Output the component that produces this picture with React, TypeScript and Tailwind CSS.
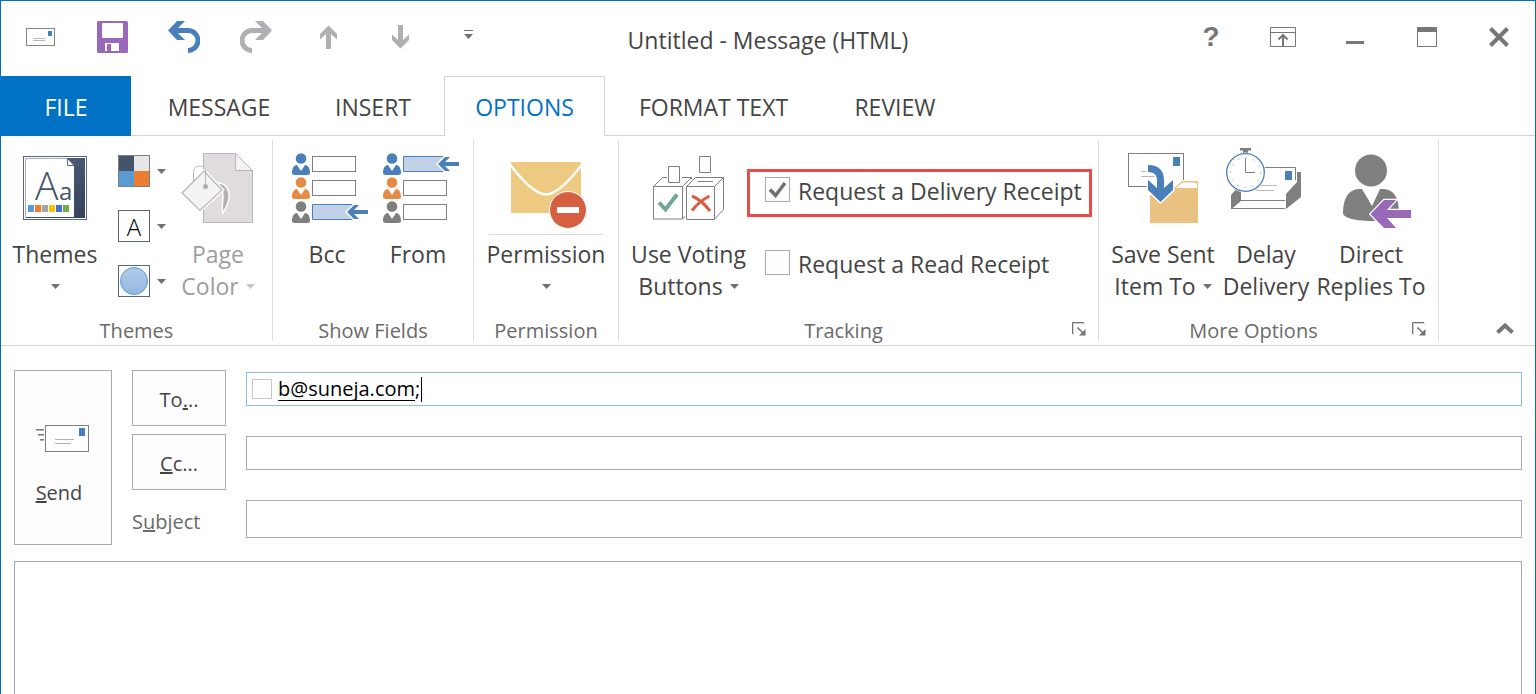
import { FC, ReactNode, useState } from 'react'
import clsx from 'clsx'

const PEOPLE = ['#4a80ba', '#e68b45', '#7f7f7f']

/* Quick access toolbar */

const EnvelopeIcon = () => (
  <svg width="29" height="18" viewBox="0 0 29 18" fill="none">
    <rect x=".5" y=".5" width="28" height="17" stroke="#848484" />
    <rect x="22" y="3" width="4" height="5" fill="#4a80ba" />
    <path d="M7 10.500h12M7 12.500h12" stroke="#b9b9b9" />
  </svg>
)

const SaveIcon = () => (
  <svg width="31" height="32" viewBox="0 0 31 32">
    <rect width="31" height="32" rx="1.500" fill="#9968b8" />
    <rect x="5" y="2" width="21" height="15" rx="1" fill="#fff" />
    <rect x="8" y="22" width="14" height="8" fill="#fff" />
    <rect x="10" y="23" width="4" height="8" fill="#9968b8" />
  </svg>
)

const UndoIcon: FC<{ flip?: boolean }> = ({ flip }) => (
  <svg width="32" height="32" viewBox="0 0 32 32" className={clsx(flip ? '-scale-x-100 text-[#b1afb1]' : 'text-[#4a80ba]')}>
    <path d="M6 9.500h14a10 10 0 0 1 0 20" fill="none" stroke="currentColor" strokeWidth="5" />
    <path d="M0 9.500 9 0h8l-7 7v5l7 7H9z" fill="currentColor" />
  </svg>
)

const ArrowIcon: FC<{ down?: boolean }> = ({ down }) => (
  <svg width="17" height="24" viewBox="0 0 17 24" className={clsx(down && 'rotate-180')}>
    <path d="M8.500 .5 17 9v5.500L11 9v15H6V9l-6 5.500V9z" fill="#b1afb1" />
  </svg>
)

const CustomizeIcon = () => (
  <svg width="9" height="16" viewBox="0 0 9 16" className="mr-2">
    <path d="M0 1h9v1H0zM0 5h9L4.500 10z" fill="#717171" />
  </svg>
)

/* Window controls */

const RibbonDisplayIcon = () => (
  <svg width="26" height="20" viewBox="0 0 26 20" fill="none" stroke="#767676">
    <path d="M.5 .5h25v19H.5zM.5 5.500h25" />
    <path d="M13 19V8M8.500 12.500 13 8l4.500 4.500" strokeWidth="2" />
  </svg>
)

const MinimizeIcon = () => (
  <svg width="18" height="20" viewBox="0 0 18 20">
    <path d="M0 14h18v3H0z" fill="#767676" />
  </svg>
)

const MaximizeIcon = () => (
  <svg width="20" height="20" viewBox="0 0 20 20" fill="none">
    <rect x=".5" y=".5" width="19" height="19" stroke="#767676" />
    <path d="M0 0h20v5H0z" fill="#767676" />
  </svg>
)

const CloseIcon = () => (
  <svg width="20" height="20" viewBox="0 0 20 20">
    <path d="m1.500 1.500 17 17m0-17-17 17" stroke="#767676" strokeWidth="4" />
  </svg>
)

/* Ribbon */

const ThemesIcon = () => (
  <svg width="64" height="99" viewBox="0 0 64 99" fill="none">
    <defs>
      <linearGradient id="spine" x1="0" y1="0" x2="1" y2="1">
        <stop offset="0" stopColor="#5b6a84" />
        <stop offset="1" stopColor="#32425a" />
      </linearGradient>
    </defs>
    <rect x=".5" y="16.500" width="63" height="63" stroke="#58667f" />
    <path d="M2.500 78V18.500H44" stroke="#a3adbf" />
    <path d="M44 18h18v60H3v-1h48V26z" fill="url(#spine)" />
    <path d="M44.500 18.500v7H51z" fill="#fff" stroke="#58667f" />
    <text x="12" y="60" fontFamily="Open Sans, sans-serif" fontWeight="300" fontSize="39" fill="#44546a">A</text>
    <text x="36" y="60" fontFamily="Open Sans, sans-serif" fontSize="24" fill="#44546a">a</text>
    <path d="M5 65h6v7H5z" fill="#5b9bd5" />
    <path d="M12 65h6v7h-6z" fill="#ed7d31" />
    <path d="M19 65h6v7h-6z" fill="#a5a5a5" />
    <path d="M26 65h6v7h-6z" fill="#ffc000" />
    <path d="M33 65h6v7h-6z" fill="#4472c4" />
    <path d="M40 65h6v7h-6z" fill="#70ad47" />
  </svg>
)

const ColorsIcon = () => (
  <svg width="32" height="32" viewBox="0 0 32 32">
    <path d="M0 0h16v16H0z" fill="#44546a" />
    <path d="M16 0h16v16H16z" fill="#e7e6e6" />
    <path d="M0 16h16v16H0z" fill="#5b9bd5" />
    <path d="M16 16h16v16H16z" fill="#ed7d31" />
    <rect x=".5" y=".5" width="31" height="31" fill="none" stroke="#7f7f7f" />
  </svg>
)

const FontsIcon = () => (
  <svg width="32" height="32" viewBox="0 0 32 32">
    <rect x=".5" y=".5" width="31" height="31" fill="#fff" stroke="#58667f" />
    <text x="16" y="26" textAnchor="middle" fontFamily="Open Sans, sans-serif" fontWeight="300" fontSize="24" fill="#000">A</text>
  </svg>
)

const EffectsIcon = () => (
  <svg width="32" height="32" viewBox="0 0 32 32">
    <defs>
      <linearGradient id="effect" x1="0" y1="0" x2="0" y2="1">
        <stop offset="0" stopColor="#b1cbe9" />
        <stop offset="1" stopColor="#95b8e1" />
      </linearGradient>
    </defs>
    <rect x=".5" y=".5" width="31" height="31" fill="#fff" stroke="#58667f" />
    <circle cx="16" cy="16" r="13.500" fill="url(#effect)" stroke="#5b9bd5" />
  </svg>
)

const PageColorIcon = () => (
  <svg width="74" height="99" viewBox="0 0 74 99" stroke="#b7b4b7">
    <path d="M22.500 13.500h32l17 17v52h-49z" fill="#dfdbdf" />
    <path d="M54.500 13.500v17h17z" fill="#f5f2f5" />
    <path d="M35 43c8-1 14 5 13 15-1 6-3 10-6 15-2-6 0-10 0-16 0-4-1-8-3-9z" fill="#b1afb1" stroke="#fff" strokeWidth="1.500" />
    <path d="m1 53 22-22 18 19-22 20.500z" fill="#f5f2f5" stroke="#fff" strokeWidth="4" />
    <path d="m1 53 22-22 18 19-22 20.500z" fill="#f5f2f5" strokeWidth="1.200" />
    <path d="M12.500 41v-9c0-8 12-8 12 0v14" fill="none" />
    <circle cx="24.500" cy="46.500" r="2.500" fill="#b1afb1" stroke="none" />
  </svg>
)

// active is the row that gets highlighted with the arrow
const FieldsIcon: FC<{ active: number }> = ({ active }) => (
  <svg width="82" height="99" viewBox="0 0 82 99">
    {PEOPLE.map((color, i) => (
      <g key={i} transform={`translate(0 ${i * 24})`}>
        <circle cx="15" cy="18.500" r="5.300" fill={color} />
        <path d="M11 25l4 6 4-6c3 0 5 3 5 8 0 1-1 2-3 2H9c-2 0-3-1-3-2 0-5 2-8 5-8z" fill={color} />
        {i === active ? (
          <>
            <path d="M26.500 16.500H67L61 24l6 7.500H26.500z" fill="#c1d2e8" />
            <path d="M66 16.500H26.500v15H66" fill="none" stroke="#4a80ba" />
            <path d="M59 24l9-9h9l-6 6.500h12v5H71l6 6.500h-9z" fill="#fff" />
            <path d="M61 24l7-7h5l-5 5h14v4H68l5 5h-5z" fill="#4a80ba" />
          </>
        ) : (
          <rect x="26.500" y="16.500" width="43" height="15" fill="none" stroke="#7f7f7f" />
        )}
      </g>
    ))}
  </svg>
)

const PermissionIcon = () => (
  <svg width="114" height="99" viewBox="0 0 114 99">
    <path d="M22 22h70v51H22z" fill="#eec981" />
    <path d="M21 24.500C36 44 48 54.500 57 54.500S78 44 93 24.500" fill="none" stroke="#fff" strokeWidth="2.500" />
    <circle cx="79" cy="70" r="18.500" fill="#d75f41" stroke="#fff" />
    <path d="M68 67h22v6H68z" fill="#fff" />
    <path d="M0 94h114v1H0z" fill="#dcdcdc" />
  </svg>
)

const VotingIcon = () => (
  <svg width="74" height="99" viewBox="0 0 74 99" fill="#fff" stroke="#7f7f7f">
    <path d="M1.500 46.500l9-9h29v32l-9 9.500h-29zM1.500 46.500h29V79M30.500 46.500l9-9" />
    <path d="M34.500 46.500l9-9h28v32L63 79.500H34.500zM34.500 46.500h28v33M62.500 46.500l9-9" stroke="#fff" strokeWidth="3" />
    <path d="M34.500 46.500l9-9h28v32l-9 10h-28zM34.500 46.500h28v33M62.500 46.500l9-9M46 41.500h15" />
    <path d="M15 37h15v6H15z" stroke="none" />
    <path d="M16.500 26.500h11v16h-11zM47.500 16.500h11v16h-11z" />
    <path d="M7 62.500l6.500 7L25 54.500" fill="none" stroke="#75a798" strokeWidth="4" />
    <path d="M40 56c7 3 12 7 18 15M57.500 56C50 60 45 64 40 70.500" fill="none" stroke="#d75f41" strokeWidth="3" />
  </svg>
)

const SaveSentIcon = () => (
  <svg width="70" height="99" viewBox="0 0 70 99">
    <rect x=".5" y="13.500" width="55" height="33" fill="#fff" stroke="#7f7f7f" />
    <path d="M45 17h7v9h-7z" fill="#4a80ba" />
    <path d="M13 31.500h15M13 36.500h15" stroke="#b9b9b9" />
    <path d="M21 47h25l7-7h19v44H21z" fill="#fff" />
    <path d="M22 48h24l8-7h16v42H22z" fill="#eac282" />
    <path d="M48 48l6.500-5.500H67q2 0 2 2V48z" fill="#fff" />
    <path d="M20 25c11 0 16 6 16 15v8l9-8v10L32.500 62 20 50V40l9 8v-8c0-5-3-8-9-8z" fill="#4a80ba" stroke="#fff" strokeWidth="3" paintOrder="stroke" />
  </svg>
)

const DelayIcon = () => (
  <svg width="80" height="99" viewBox="0 0 80 99">
    <path d="M37 27.500h32.500V40M5 68.500h54M15 60.500h44" fill="none" stroke="#7f7f7f" />
    <path d="M59 31h7v9h-7z" fill="#4a80ba" />
    <path d="M35 45.500h16M30 50.500h18" stroke="#b9b9b9" />
    <path d="M5 55l7-8 3 3v11L5 69.500zM60 54l11-12V32h4v25L60 69z" fill="#7f7f7f" />
    <path d="M14 8h11v2.500h-3V14h-5v-3.500h-3z" fill="#7f7f7f" />
    <circle cx="19.500" cy="32.500" r="20" fill="#fff" />
    <circle cx="19.500" cy="32.500" r="18.800" fill="#fff" stroke="#4a80ba" strokeWidth="1.300" />
    <circle cx="19.500" cy="32.500" r="15" fill="none" stroke="#8c8c8c" strokeDasharray="1 6.854" />
    <path d="M19.500 18v14.500H29" fill="none" stroke="#7f7f7f" />
  </svg>
)

const DirectIcon = () => (
  <svg width="80" height="99" viewBox="0 0 80 99">
    <circle cx="40" cy="30.500" r="16" fill="#7f7f7f" />
    <path d="M31 49l10 17 8-17h4c11 1 15 10 15 24 0 5-13 8-28 8s-28-3-28-8c0-14 5-23 15-24z" fill="#7f7f7f" />
    <path d="M39.500 74 53 60h12L56 70h24v8H56l9 10H53z" fill="#9968b8" stroke="#fff" strokeWidth="2.500" paintOrder="stroke" />
  </svg>
)

const LauncherIcon = () => (
  <svg width="14" height="14" viewBox="0 0 14 14" fill="none">
    <path d="M1.500 13V1.500H13" stroke="#d0d0d0" />
    <path d="M.5 12V.5H12" stroke="#717171" />
    <path d="m5.500 5.500 5 5" stroke="#717171" strokeWidth="1.500" />
    <path d="M13.500 7v6.500H7z" fill="#717171" />
  </svg>
)

const SendIcon = () => (
  <svg width="53" height="27" viewBox="0 0 53 27" fill="none">
    <rect x="9.500" y=".5" width="43" height="26" fill="#fff" stroke="#7f7f7f" />
    <path d="M43 3h6v8h-6z" fill="#4a80ba" />
    <path d="M19 14.500h19M19 18.500h16M0 5.500h8M2 10.500h6M4 15.500h4" stroke="#b1b1b1" />
    <path d="M0 4.500h8M2 9.500h6M4 14.500h4" stroke="#7f7f7f" />
  </svg>
)

const Caret: FC<{ muted?: boolean }> = ({ muted }) => (
  <svg width="9" height="5" viewBox="0 0 9 5" className={clsx('inline-block shrink-0', muted ? 'text-[#c6c6c6]' : 'text-[#717171]')}>
    <path d="M0 0h9L4.500 5z" fill="currentColor" />
  </svg>
)

interface RibbonButtonProps {
  icon: ReactNode
  lines: string[]
  caret?: boolean
  disabled?: boolean
  className?: string
}

const RibbonButton: FC<RibbonButtonProps> = ({ icon, lines, caret, disabled, className }) => (
  <button
    type="button"
    disabled={disabled}
    className={clsx('flex flex-col items-center text-[23px] leading-8 whitespace-nowrap', disabled && 'text-[#9e9e9e]', className)}
  >
    {icon}
    <span className="-mt-px">{lines[0]}</span>
    <span className="flex h-8 items-center gap-[7px]">
      {lines[1]}
      {caret && <Caret muted={disabled} />}
    </span>
  </button>
)

interface GroupProps {
  label: string
  launcher?: boolean
  className?: string
  children: ReactNode
}

const Group: FC<GroupProps> = ({ label, launcher, className, children }) => (
  <section aria-label={label} className={clsx('flex shrink-0 flex-col justify-between border-r border-[#dcdcdc]', className)}>
    <div className="flex items-start">{children}</div>
    <div className="mt-[19px] flex items-center text-[20px] leading-5 text-[#6a6a6a]">
      <span className="flex-1 text-center">{label}</span>
      {launcher && (
        <button type="button" aria-label={`${label} settings`} className="pr-3 pb-1 pl-1">
          <LauncherIcon />
        </button>
      )}
    </div>
  </section>
)

interface ReceiptProps {
  label: string
  defaultChecked?: boolean
  highlight?: boolean
}

const Receipt: FC<ReceiptProps> = ({ label, defaultChecked, highlight }) => (
  <label
    className={clsx(
      'flex h-12 items-start gap-2 border-[3px] pl-[15px] text-[23px] leading-[38px] whitespace-nowrap',
      highlight ? 'border-[#ec4b47]' : 'border-transparent'
    )}
  >
    <span className="mt-[5px] grid">
      <input
        type="checkbox"
        defaultChecked={defaultChecked}
        className="peer size-[25px] appearance-none border border-[#ababab] bg-[#fdfdfd] [grid-area:1/1]"
      />
      <svg width="25" height="25" viewBox="0 0 25 25" className="pointer-events-none invisible [grid-area:1/1] peer-checked:visible">
        <path d="M5 12.500l5.500 6L20 6" fill="none" stroke="#717171" strokeWidth="3.500" />
      </svg>
    </span>
    {label}
  </label>
)

const TABS = [
  { name: 'MESSAGE', width: 'w-[166px]' },
  { name: 'INSERT', width: 'w-[142px]' },
  { name: 'OPTIONS', width: 'w-[161px]' },
  { name: 'FORMAT TEXT', width: 'w-[217px]' },
  { name: 'REVIEW', width: 'w-[146px]' },
]

const TitleBar = () => (
  <header className="grid h-[75px] grid-cols-[1fr_auto_1fr] items-start">
    <div className="flex pl-[3px] [&>button]:flex [&>button]:h-[72px] [&>button]:w-[72px] [&>button]:items-center [&>button]:justify-center">
      <button type="button" aria-label="Message"><EnvelopeIcon /></button>
      <button type="button" aria-label="Save"><SaveIcon /></button>
      <button type="button" aria-label="Undo"><UndoIcon /></button>
      <button type="button" aria-label="Redo"><UndoIcon flip /></button>
      <button type="button" aria-label="Previous item"><ArrowIcon /></button>
      <button type="button" aria-label="Next item"><ArrowIcon down /></button>
      <button type="button" aria-label="Customize toolbar"><CustomizeIcon /></button>
    </div>
    <h1 className="self-center pt-[2px] text-[23px] leading-8">Untitled - Message (HTML)</h1>
    <div className="flex justify-end [&>button]:flex [&>button]:h-[72px] [&>button]:w-[72px] [&>button]:items-center [&>button]:justify-center">
      <button type="button" aria-label="Help" className="font-['Liberation_Sans',sans-serif] text-[28px] font-bold text-[#767676]">?</button>
      <button type="button" aria-label="Ribbon display options"><RibbonDisplayIcon /></button>
      <button type="button" aria-label="Minimize"><MinimizeIcon /></button>
      <button type="button" aria-label="Maximize"><MaximizeIcon /></button>
      <button type="button" aria-label="Close"><CloseIcon /></button>
    </div>
  </header>
)

const Ribbon = () => (
  <div className="flex border-b border-[#d4d4d4] py-1">
    <Group label="Themes" className="w-[272px]">
      <RibbonButton icon={<ThemesIcon />} lines={['Themes']} caret className="ml-[10px] w-[88px]" />
      <div className="ml-[19px] flex flex-col gap-[23px] pt-[15px]">
        <button type="button" aria-label="Colors" className="flex items-center gap-[7px]"><ColorsIcon /><Caret /></button>
        <button type="button" aria-label="Fonts" className="flex items-center gap-[7px]"><FontsIcon /><Caret /></button>
        <button type="button" aria-label="Effects" className="flex items-center gap-[7px]"><EffectsIcon /><Caret /></button>
      </div>
      <RibbonButton icon={<PageColorIcon />} lines={['Page', 'Color']} caret disabled className="ml-[9px] w-[86px]" />
    </Group>
    <Group label="Show Fields" className="w-[201px]">
      <RibbonButton icon={<FieldsIcon active={2} />} lines={['Bcc']} className="ml-[9px] w-[90px]" />
      <RibbonButton icon={<FieldsIcon active={0} />} lines={['From']} className="w-[92px]" />
    </Group>
    <Group label="Permission" className="w-[145px]">
      <RibbonButton icon={<PermissionIcon />} lines={['Permission']} caret className="w-full" />
    </Group>
    <Group label="Tracking" launcher className="w-[480px]">
      <RibbonButton icon={<VotingIcon />} lines={['Use Voting', 'Buttons']} caret className="ml-[11px] w-[117px]" />
      <div className="flex w-[345px] flex-col gap-[25px] pt-[29px]">
        <Receipt label="Request a Delivery Receipt" defaultChecked highlight />
        <Receipt label="Request a Read Receipt" />
      </div>
    </Group>
    <Group label="More Options" launcher className="w-[340px]">
      <RibbonButton icon={<SaveSentIcon />} lines={['Save Sent', 'Item To']} caret className="ml-[7px] w-[114px]" />
      <RibbonButton icon={<DelayIcon />} lines={['Delay', 'Delivery']} className="w-[92px]" />
      <RibbonButton icon={<DirectIcon />} lines={['Direct', 'Replies To']} className="w-[118px]" />
    </Group>
    <button type="button" aria-label="Collapse the ribbon" className="mr-[21px] mb-[7px] ml-auto self-end">
      <svg width="18" height="11" viewBox="0 0 18 11">
        <path d="m1.500 9.500 7.500-7 7.500 7" fill="none" stroke="#767676" strokeWidth="4" />
      </svg>
    </button>
  </div>
)

const FIELD = 'mt-[2px] w-full border border-[#ababab] bg-white px-2 text-[20px] outline-none'
const BOX_BUTTON = 'border border-[#ababab] bg-[#fdfdfd] text-[20px]'

const Compose = () => {
  const [cc, setCc] = useState('')
  const [subject, setSubject] = useState('')

  return (
    <main className="flex flex-1 flex-col px-[13px] pt-6">
      <div className="grid grid-cols-[98px_94px_1fr] grid-rows-[56px_56px_47px] items-start gap-x-5 gap-y-2">
        <button type="button" className={clsx(BOX_BUTTON, 'row-span-3 flex flex-col items-center gap-[26px] self-stretch pt-[54px] pr-2')}>
          <span className="pl-[6px]"><SendIcon /></span>
          <span><u>S</u>end</span>
        </button>
        <button type="button" className={clsx(BOX_BUTTON, 'h-14 pt-[3px]')}>To<u>.</u>..</button>
        <div className="mt-[2px] flex h-[34px] items-center border border-[#8fbfe0] bg-white pl-[5px] text-[20px] leading-6 text-black">
          <span className="mr-[6px] size-5 border border-[#c8c8c8]" />
          <span className="underline decoration-1 underline-offset-4 [text-decoration-skip-ink:none]">b@suneja.com</span>;
          <span className="ml-px h-[25px] w-px bg-black" />
          <input aria-label="To" className="min-w-0 flex-1 outline-none" />
        </div>
        <button type="button" className={clsx(BOX_BUTTON, 'h-14 pt-[3px]')}><u>C</u>c...</button>
        <input aria-label="Cc" value={cc} onChange={(e) => setCc(e.target.value)} className={clsx(FIELD, 'h-[34px]')} />
        <label htmlFor="subject" className="text-[20px] leading-[47px] text-[#6a6a6a]">S<u>u</u>bject</label>
        <input id="subject" value={subject} onChange={(e) => setSubject(e.target.value)} className={clsx(FIELD, 'h-[38px]')} />
      </div>
      <textarea aria-label="Message body" className="mt-4 w-full flex-1 resize-none border border-b-0 border-[#a5a9b4] bg-white p-3 text-[20px] outline-none" />
    </main>
  )
}

export default function App() {
  const [tab, setTab] = useState('OPTIONS')

  return (
    <div className="flex min-h-screen flex-col border-x border-t border-[#0070c5] bg-white font-['Open_Sans',sans-serif] text-[#444]">
      <TitleBar />
      <nav className="flex h-[60px] text-[23px]">
        <button type="button" className="w-[130px] bg-[#0072c6] pt-[3px] text-white">FILE</button>
        <span className="w-[5px] border-b border-[#d4d4d4]" />
        {TABS.map(({ name, width }) => (
          <button
            key={name}
            type="button"
            onClick={() => setTab(name)}
            className={clsx(
              'border-[#d4d4d4] whitespace-nowrap',
              width,
              name === tab ? 'border-x border-t pt-[2px] text-[#0072c6]' : 'border-b pt-1'
            )}
          >
            {name}
          </button>
        ))}
        <span className="flex-1 border-b border-[#d4d4d4]" />
      </nav>
      <Ribbon />
      <Compose />
    </div>
  )
}
